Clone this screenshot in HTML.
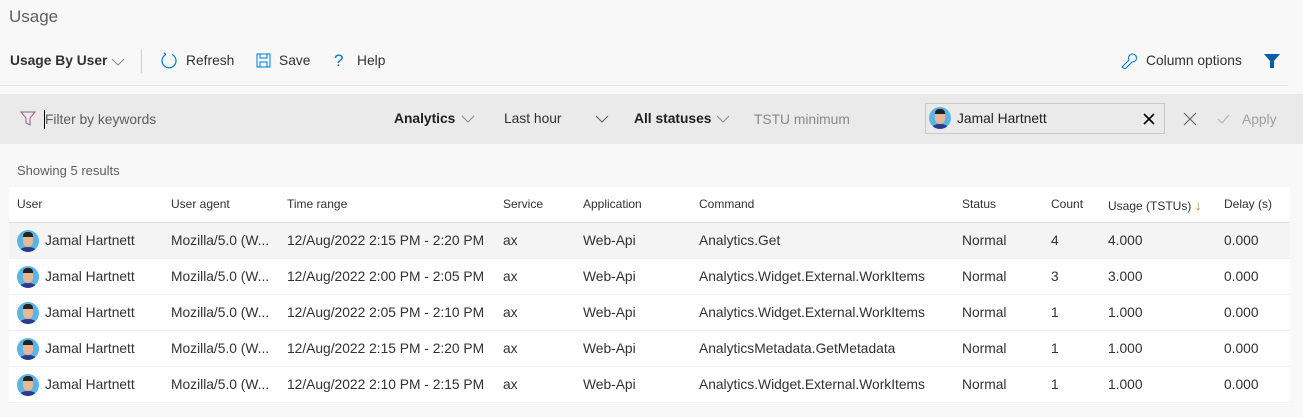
<!DOCTYPE html>
<html><head><style>
*{margin:0;padding:0;box-sizing:border-box}
body{width:1303px;height:417px;background:#f8f8f8;font-family:"Segoe UI","Liberation Sans",sans-serif;font-size:13.8px;color:#323130;position:relative;overflow:hidden}
.a{position:absolute;white-space:nowrap}
.fb{position:absolute;left:0;top:94px;width:1303px;height:50px;background:#eaeaea}
.tbl{position:absolute;left:9px;top:187px;width:1281px;height:217px;background:#fff}
.row{position:absolute;left:0;width:1281px;height:36px;border-bottom:1px solid #f0f0f0}
.row span{position:absolute;top:10px;font-size:13.8px;color:#323130}
.hd span{position:absolute;top:10px;font-size:12px;color:#323130}
.av{position:absolute;left:8px;top:7px;width:22px;height:22px;border-radius:50%;background:#5ab4e4;overflow:hidden}
.av:before{content:"";position:absolute;left:6px;top:5px;width:10px;height:12px;border-radius:4px 4px 5px 5px;background:#e8b894}
.av:after{content:"";position:absolute;left:3px;top:17px;width:16px;height:8px;border-radius:50% 50% 0 0;background:#2b3a8a}
.hair{position:absolute;left:6px;top:2px;width:10px;height:5px;background:#222;border-radius:4px 4px 0 0;z-index:2}
</style></head><body>
<div class="a" style="left:9px;top:7px;font-size:17px;color:#605e5c">Usage</div>
<div class="a" style="left:10px;top:53px;font-weight:600">Usage By User</div>
<svg class="a" style="left:111px;top:57px" width="14" height="10"><path d="M1 2l6 6 6-6" stroke="#8a8886" fill="none"/></svg>
<div class="a" style="left:141px;top:49px;width:1px;height:24px;background:#d0d0d0"></div>
<svg class="a" style="left:160px;top:52px" width="18" height="18"><path d="M6 2.5A7 7 0 1 0 12 2.5" stroke="#0078d4" fill="none" stroke-width="1.2"/><path d="M6 2.5L4 1" stroke="#0078d4" fill="none" stroke-width="1.2"/></svg>
<div class="a" style="left:186px;top:53px">Refresh</div>
<svg class="a" style="left:256px;top:53px" width="15" height="15"><rect x="1" y="1" width="13" height="13" stroke="#0078d4" fill="none"/><rect x="4" y="1" width="7" height="4" stroke="#0078d4" fill="none"/><rect x="4" y="9" width="7" height="5" stroke="#0078d4" fill="none"/></svg>
<div class="a" style="left:279px;top:53px">Save</div>
<div class="a" style="left:334px;top:51px;font-size:17px;color:#0078d4">?</div>
<div class="a" style="left:357px;top:53px">Help</div>
<svg class="a" style="left:1120px;top:53px" width="18" height="16"><path d="M2 14l7-7a4 4 0 1 1 3 2l-7 7z" stroke="#0078d4" fill="none" stroke-width="1"/></svg>
<div class="a" style="left:1146px;top:53px">Column options</div>
<svg class="a" style="left:1263px;top:53px" width="18" height="16"><path d="M1 1h16l-6 7v7h-4v-7z" fill="#0b5ea6"/></svg>
<div class="a" style="left:0;top:85px;width:1288px;height:1px;background:#e6e6e6"></div>
<div class="fb"></div>
<svg class="a" style="left:20px;top:111px" width="16" height="16"><path d="M1 1h14l-5 6v7l-4-2v-5z" stroke="#a05a90" fill="none"/></svg>
<div class="a" style="left:44px;top:110px;width:1px;height:19px;background:#000"></div>
<div class="a" style="left:45px;top:112px;color:#605e5c">Filter by keywords</div>
<div class="a" style="left:394px;top:111px;font-weight:600;color:#201f1e">Analytics</div>
<svg class="a" style="left:461px;top:114px" width="14" height="10"><path d="M1 2l6 6 6-6" stroke="#8a8886" fill="none"/></svg>
<div class="a" style="left:504px;top:111px">Last hour</div>
<svg class="a" style="left:595px;top:114px" width="14" height="10"><path d="M1 2l6 6 6-6" stroke="#605e5c" fill="none"/></svg>
<div class="a" style="left:634px;top:111px;font-weight:600;color:#201f1e">All statuses</div>
<svg class="a" style="left:716px;top:114px" width="14" height="10"><path d="M1 2l6 6 6-6" stroke="#8a8886" fill="none"/></svg>
<div class="a" style="left:754px;top:112px;color:#8a8886">TSTU minimum</div>
<div class="a" style="left:925px;top:103px;width:240px;height:31px;border:1px solid #c8c8c8;background:#eaeaea"></div>
<div class="av" style="left:929px;top:107px"><div class="hair"></div></div>
<div class="a" style="left:957px;top:111px;color:#201f1e">Jamal Hartnett</div>
<svg class="a" style="left:1143px;top:113px" width="12" height="12"><path d="M1 1l10 10M11 1L1 11" stroke="#000" stroke-width="1.6"/></svg>
<svg class="a" style="left:1183px;top:112px" width="14" height="14"><path d="M1 1l12 12M13 1L1 13" stroke="#605e5c" stroke-width="1.1"/></svg>
<svg class="a" style="left:1217px;top:114px" width="13" height="10"><path d="M1 5l4 4 7-8" stroke="#b0b0b0" fill="none"/></svg>
<div class="a" style="left:1242px;top:112px;color:#a19f9d">Apply</div>
<div class="a" style="left:17px;top:163px;font-size:13px;color:#605e5c">Showing 5 results</div>
<div class="tbl">
<div class="row hd" style="top:0;height:36px;border-bottom:1px solid #e0e0e0"><span style="left:8px">User</span><span style="left:162px">User agent</span><span style="left:278px">Time range</span><span style="left:494px">Service</span><span style="left:574px">Application</span><span style="left:690px">Command</span><span style="left:953px">Status</span><span style="left:1042px">Count</span><span style="left:1099px">Usage (TSTUs) <b style="font-weight:normal;color:#c87a2b;font-size:14px">↓</b></span><span style="left:1215px">Delay (s)</span></div>
<div class="row" style="top:36px;background:#f4f4f4"><div class="av"><div class="hair"></div></div><span style="left:36px">Jamal Hartnett</span><span style="left:162px">Mozilla/5.0 (W...</span><span style="left:278px">12/Aug/2022 2:15 PM - 2:20 PM</span><span style="left:494px">ax</span><span style="left:574px">Web-Api</span><span style="left:690px">Analytics.Get</span><span style="left:953px">Normal</span><span style="left:1042px">4</span><span style="left:1099px">4.000</span><span style="left:1215px">0.000</span></div>
<div class="row" style="top:72px"><div class="av"><div class="hair"></div></div><span style="left:36px">Jamal Hartnett</span><span style="left:162px">Mozilla/5.0 (W...</span><span style="left:278px">12/Aug/2022 2:00 PM - 2:05 PM</span><span style="left:494px">ax</span><span style="left:574px">Web-Api</span><span style="left:690px">Analytics.Widget.External.WorkItems</span><span style="left:953px">Normal</span><span style="left:1042px">3</span><span style="left:1099px">3.000</span><span style="left:1215px">0.000</span></div>
<div class="row" style="top:108px"><div class="av"><div class="hair"></div></div><span style="left:36px">Jamal Hartnett</span><span style="left:162px">Mozilla/5.0 (W...</span><span style="left:278px">12/Aug/2022 2:05 PM - 2:10 PM</span><span style="left:494px">ax</span><span style="left:574px">Web-Api</span><span style="left:690px">Analytics.Widget.External.WorkItems</span><span style="left:953px">Normal</span><span style="left:1042px">1</span><span style="left:1099px">1.000</span><span style="left:1215px">0.000</span></div>
<div class="row" style="top:144px"><div class="av"><div class="hair"></div></div><span style="left:36px">Jamal Hartnett</span><span style="left:162px">Mozilla/5.0 (W...</span><span style="left:278px">12/Aug/2022 2:15 PM - 2:20 PM</span><span style="left:494px">ax</span><span style="left:574px">Web-Api</span><span style="left:690px">AnalyticsMetadata.GetMetadata</span><span style="left:953px">Normal</span><span style="left:1042px">1</span><span style="left:1099px">1.000</span><span style="left:1215px">0.000</span></div>
<div class="row" style="top:180px"><div class="av"><div class="hair"></div></div><span style="left:36px">Jamal Hartnett</span><span style="left:162px">Mozilla/5.0 (W...</span><span style="left:278px">12/Aug/2022 2:10 PM - 2:15 PM</span><span style="left:494px">ax</span><span style="left:574px">Web-Api</span><span style="left:690px">Analytics.Widget.External.WorkItems</span><span style="left:953px">Normal</span><span style="left:1042px">1</span><span style="left:1099px">1.000</span><span style="left:1215px">0.000</span></div>
</div>
</body></html>
